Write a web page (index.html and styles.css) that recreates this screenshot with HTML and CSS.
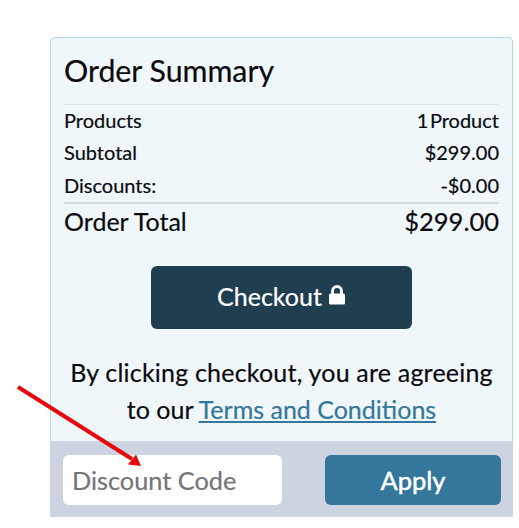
FILE: index.html
```html
<!DOCTYPE html>
<html lang="en">
<head>
    <meta charset="UTF-8">
    <title>Order Summary</title>
    <link rel="stylesheet" href="styles.css">
</head>
<body>
    <div class="summary-card">
        <div class="summary-body">
            <h2>Order Summary</h2>
            <div class="rows">
                <div class="row"><span>Products</span><span class="count">1 Product</span></div>
                <div class="row"><span>Subtotal</span><span>$299.00</span></div>
                <div class="row"><span>Discounts:</span><span>-$0.00</span></div>
            </div>
            <div class="total"><span>Order Total</span><span class="total-price">$299.00</span></div>
            <button class="checkout-btn">
                Checkout
                <svg class="lock" viewBox="0 0 18 20" width="18" height="20">
                    <path d="M4.5 9V6a4.5 4.5 0 0 1 9 0v3" fill="none" stroke="#fff" stroke-width="2.8"/>
                    <rect x="1" y="8.5" width="16" height="11" rx="1.6" fill="#fff"/>
                </svg>
            </button>
            <p class="terms"><span class="terms-lead">By clicking checkout, you are agreeing</span> to our <a href="#">Terms and Conditions</a></p>
        </div>
        <div class="discount">
            <input type="text" placeholder="Discount Code">
            <button class="apply-btn">Apply</button>
        </div>
    </div>

    <!-- red annotation arrow on top of the card -->
    <svg class="arrow" width="519" height="528" viewBox="0 0 519 528">
        <line x1="18" y1="387" x2="132" y2="459" stroke="#e8090f" stroke-width="4"/>
        <polygon points="141,466 128,464.5 136,454.5" fill="#e8090f"/>
    </svg>
</body>
</html>
```

FILE: styles.css
```css
* {
    margin: 0;
    padding: 0;
    box-sizing: border-box;
    font-family: 'Lato', 'Open Sans', sans-serif;
}

body {
    background-color: white;
    padding: 37px 6px 0 50px;
    color: #0b0b0f;
    -webkit-text-stroke: 0.2px;
}

.summary-card {
    background-color: #eff7fa;
    border-radius: 5px 5px 0 0;
}

.summary-body {
    border: 1px solid #b3dbe3;
    border-bottom: none;
    border-radius: 5px 5px 0 0;
    padding: 13px 13px 0 13px;
    height: 404px;
}

h2 {
    font-size: 30.3px;
    font-weight: 400;
    line-height: 38px;
    padding-bottom: 15px;
    border-bottom: 1px solid #dbe3e8;
}

.rows {
    margin-top: -1px;
    padding-bottom: 1px;
}

.row {
    display: flex;
    justify-content: space-between;
    font-size: 20px;
    line-height: 32px;
}

.row:last-child {
    margin-top: 1px;
}

.count {
    word-spacing: -3.5px;
}

.total {
    display: flex;
    justify-content: space-between;
    font-size: 25px;
    line-height: 38px;
    border-top: 2px solid #d5dde2;
}

.total span {
    position: relative;
    top: -2px;
}

.total-price {
    font-size: 25.5px;
}

.checkout-btn {
    display: flex;
    align-items: center;
    justify-content: center;
    gap: 6px;
    width: 261px;
    height: 63px;
    margin: 24px auto 0;
    padding-bottom: 4px;
    background-color: #1f3e50;
    color: white;
    border: none;
    border-radius: 6px;
    font-size: 25px;
}

.lock {
    margin-bottom: 1px;
}

.terms {
    margin-top: 25px;
    text-align: center;
    font-size: 25px;
    line-height: 37px;
}

.terms-lead {
    letter-spacing: 0.2px;
}

.terms a {
    color: #34779a;
}

.discount {
    display: flex;
    justify-content: space-between;
    height: 76px;
    padding: 14px 12px 12px 13px;
    background-color: #cbd4e0;
}

.discount input {
    width: 219px;
    height: 50px;
    padding-left: 9px;
    background-color: white;
    border: none;
    border-radius: 6px;
    font-size: 25.3px;
}

.discount input::placeholder {
    color: #757575;
    opacity: 1;
}

.apply-btn {
    width: 176px;
    height: 50px;
    background-color: #34779a;
    color: white;
    border: none;
    border-radius: 6px;
    font-size: 25.5px;
    -webkit-text-stroke: 0.5px;
}

.arrow {
    position: absolute;
    top: 0;
    left: 0;
    pointer-events: none;
}
```
